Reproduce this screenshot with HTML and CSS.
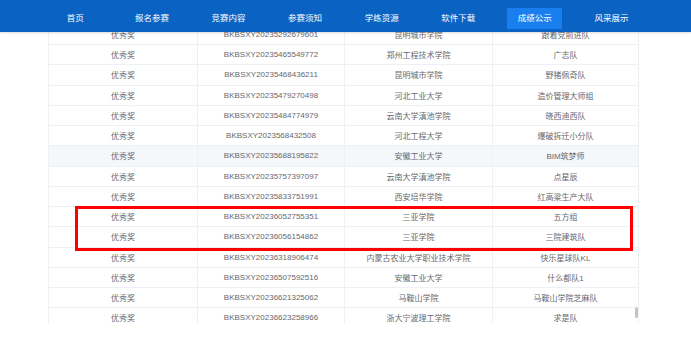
FILE: index.html
```html
<!DOCTYPE html>
<html lang="zh-CN">

<head>
  <meta charset="UTF-8" />
  <meta name="viewport" content="width=device-width, initial-scale=1.0" />
  <title>成绩公示</title>
  <link rel="stylesheet" href="styles.css">
</head>

<body>
  <div class="topnav">
    <ul class="menu">
      <li><a>首页</a></li>
      <li><a>报名参赛</a></li>
      <li><a>竞赛内容</a></li>
      <li><a>参赛须知</a></li>
      <li><a>学练资源</a></li>
      <li><a>软件下载</a></li>
      <li><a class="active">成绩公示</a></li>
      <li><a>风采展示</a></li>
    </ul>
  </div>

  <div class="board">
    <div class="result-table">
      <div class="row"><span>优秀奖</span><span>BKBSXY20235292679601</span><span>昆明城市学院</span><span>跟着党前进队</span></div>
      <div class="row"><span>优秀奖</span><span>BKBSXY20235465549772</span><span>郑州工程技术学院</span><span>广志队</span></div>
      <div class="row"><span>优秀奖</span><span>BKBSXY20235468436211</span><span>昆明城市学院</span><span>野猪佩奇队</span></div>
      <div class="row"><span>优秀奖</span><span>BKBSXY20235479270498</span><span>河北工业大学</span><span>造价管理大师组</span></div>
      <div class="row"><span>优秀奖</span><span>BKBSXY20235484774979</span><span>云南大学滇池学院</span><span>晓西迪西队</span></div>
      <div class="row"><span>优秀奖</span><span>BKBSXY2023568432508</span><span>河北工程大学</span><span>爆破拆迁小分队</span></div>
      <div class="row hover"><span>优秀奖</span><span>BKBSXY20235688195822</span><span>安徽工业大学</span><span>BIM筑梦师</span></div>
      <div class="row"><span>优秀奖</span><span>BKBSXY20235757397097</span><span>云南大学滇池学院</span><span>点星辰</span></div>
      <div class="row"><span>优秀奖</span><span>BKBSXY20235833751991</span><span>西安培华学院</span><span>红高粱生产大队</span></div>
      <div class="row"><span>优秀奖</span><span>BKBSXY20236052755351</span><span>三亚学院</span><span>五方组</span></div>
      <div class="row"><span>优秀奖</span><span>BKBSXY20236056154862</span><span>三亚学院</span><span>三院建筑队</span></div>
      <div class="row"><span>优秀奖</span><span>BKBSXY20236318906474</span><span>内蒙古农业大学职业技术学院</span><span>快乐星球队KL</span></div>
      <div class="row"><span>优秀奖</span><span>BKBSXY20236507592516</span><span>安徽工业大学</span><span>什么都队1</span></div>
      <div class="row"><span>优秀奖</span><span>BKBSXY20236621325062</span><span>马鞍山学院</span><span>马鞍山学院芝麻队</span></div>
      <div class="row"><span>优秀奖</span><span>BKBSXY20236623258966</span><span>浙大宁波理工学院</span><span>求是队</span></div>
    </div>
    <div class="scroll-thumb"></div>
    <div class="mark"></div>
  </div>
</body>

</html>
```

FILE: styles.css
```css
body {
  margin: 0;
  padding: 0;
  background: #fff;
  font-family: "Liberation Sans", "Noto Sans CJK SC", sans-serif;
}

.topnav {
  position: relative;
  z-index: 2;
  height: 32px;
  background: #0a62c3;
  box-shadow: 0 1px 2px rgba(0, 0, 0, 0.15);
}

.menu {
  display: flex;
  margin: 0;
  padding: 7px 0 0 37px;
  list-style: none;
}

.menu li {
  width: 76.6px;
  text-align: center;
}

.menu a {
  display: inline-block;
  width: 55px;
  height: 21px;
  line-height: 21px;
  color: #fff;
  font-size: 8.5px;
  cursor: pointer;
}

.menu a.active {
  background: #1a7fee;
}

.board {
  position: relative;
  margin: -7.25px 0 0 48px;
  width: 591px;
  height: 298.25px;
  overflow: hidden;
}

.result-table {
  border-left: 1px solid #eef0f5;
  border-right: 1px solid #eef0f5;
}

.row {
  display: grid;
  grid-template-columns: 149px 147px 148px 1fr;
  height: 20.25px;
  box-sizing: border-box;
  border-bottom: 1px solid #eef0f5;
}

.row.hover {
  background: #f5f7fb;
}

.row span {
  display: flex;
  align-items: center;
  justify-content: center;
  border-right: 1px solid #eef0f5;
  color: #66686d;
  font-size: 8px;
  white-space: nowrap;
}

.row span:last-child {
  border-right: none;
}

.scroll-thumb {
  position: absolute;
  right: 1px;
  top: 282px;
  width: 3px;
  height: 11px;
  border-radius: 2px;
  background: #c4c4c4;
}

.mark {
  position: absolute;
  left: 27px;
  top: 181.5px;
  width: 558px;
  height: 45px;
  box-sizing: border-box;
  border: 3px solid #f00;
}
```
